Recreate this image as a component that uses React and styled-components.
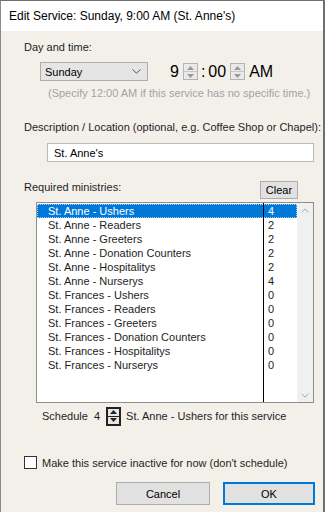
import React from "react";
import styled, { createGlobalStyle } from "styled-components";

const Global = createGlobalStyle`
  html, body { margin: 0; padding: 0; background: #f3f0e9; }
  * { box-sizing: border-box; }
`;

const ministries = [
  ["St. Anne - Ushers", 4],
  ["St. Anne - Readers", 2],
  ["St. Anne - Greeters", 2],
  ["St. Anne - Donation Counters", 2],
  ["St. Anne - Hospitalitys", 2],
  ["St. Anne - Nurserys", 4],
  ["St. Frances - Ushers", 0],
  ["St. Frances - Readers", 0],
  ["St. Frances - Greeters", 0],
  ["St. Frances - Donation Counters", 0],
  ["St. Frances - Hospitalitys", 0],
  ["St. Frances - Nurserys", 0],
];

/* janela inteira */
const Window = styled.div`
  width: 325px;
  height: 512px;
  background: #f3f0e9;
  border-top: 1px solid #6f6f6f;
  border-left: 1px solid #8a8a8a;
  border-right: 2px solid #6f6f6f;
  font-family: "Liberation Sans", Arial, sans-serif;
  font-size: 11px;
  color: #1e1e1e;
  display: flex;
  flex-direction: column;
`;

const TitleBar = styled.div`
  height: 30px;
  background: #fff;
  padding-left: 8px;
  display: flex;
  align-items: center;
  font-size: 12px;
  color: #000;
`;

const Body = styled.div`
  padding: 10px 0 0 23px;
  display: flex;
  flex-direction: column;
`;

const Label = styled.div`
  height: 13px;
  line-height: 13px;
  margin-top: ${(p) => p.$top || 0}px;
`;

const TimeRow = styled.div`
  display: flex;
  align-items: center;
  margin: 8px 0 0 16px;
  height: 19px;
`;

const Select = styled.div`
  width: 108px;
  height: 19px;
  background: #e5e5e5;
  border: 1px solid #adadad;
  display: flex;
  align-items: center;
  justify-content: space-between;
  padding: 0 6px 0 4px;
  color: #000;
`;

const TimeText = styled.span`
  font-size: 16px;
  color: #000;
  margin: ${(p) => p.$m || "0"};
`;

const Spin = styled.div`
  width: 15px;
  height: 17px;
  border: 1px solid #b4b4b4;
  background: #e9e9e9;
  display: flex;
  flex-direction: column;
`;

const SpinHalf = styled.div`
  flex: 1;
  display: flex;
  align-items: center;
  justify-content: center;
  border-top: ${(p) => (p.$bottom ? "1px solid #c8c8c8" : "none")};
`;

const Hint = styled.div`
  color: #a3a3a3;
  margin: 6px 0 0 24px;
  height: 13px;
  line-height: 13px;
`;

const Input = styled.div`
  width: 267px;
  height: 19px;
  background: #fff;
  border: 1px solid #b9b9b9;
  margin: 9px 0 0 23px;
  padding-left: 6px;
  display: flex;
  align-items: center;
  color: #000;
`;

const ReqRow = styled.div`
  display: flex;
  align-items: flex-start;
  justify-content: space-between;
  width: 274px;
  margin-top: 19px;
`;

const SmallButton = styled.div`
  width: 38px;
  height: 18px;
  background: #e1e1e1;
  border: 1px solid #adadad;
  display: flex;
  align-items: center;
  justify-content: center;
  color: #000;
`;

const ListBox = styled.div`
  width: 278px;
  height: 201px;
  margin: 3px 0 0 12px;
  border: 1px solid #8e8e8e;
  background: #fff;
  display: flex;
`;

const Rows = styled.div`
  flex: 1;
  padding-top: 1px;
  background: linear-gradient(
    to right,
    transparent 226px,
    #000 226px,
    #000 227px,
    transparent 227px
  );
`;

const Row = styled.div`
  height: 14px;
  display: grid;
  grid-template-columns: 226px 1fr;
  background: ${(p) => (p.$selected ? "#0078d7" : "transparent")};
  color: ${(p) => (p.$selected ? "#fff" : "#1e1e1e")};
  outline: ${(p) => (p.$selected ? "1px dotted #a8c8ff" : "none")};
  outline-offset: -1px;
  line-height: 14px;
`;

const NameCell = styled.div`
  padding-left: 11px;
  white-space: nowrap;
`;

const NumCell = styled.div`
  border-left: 1px solid #000;
  padding-left: 4px;
`;

const ScrollBar = styled.div`
  width: 16px;
  background: #f0f0f0;
  display: flex;
  flex-direction: column;
  justify-content: space-between;
  align-items: center;
  padding: 5px 0 4px;
`;

const ScheduleRow = styled.div`
  display: flex;
  align-items: center;
  margin: 4px 0 0 18px;
  height: 18px;
`;

const DarkSpin = styled.div`
  width: 15px;
  height: 19px;
  border: 2px solid #222;
  background: #e6e6e6;
  display: flex;
  flex-direction: column;
  margin: 0 5px 0 6px;
`;

const DarkHalf = styled.div`
  flex: 1;
  display: flex;
  align-items: center;
  justify-content: center;
  border-top: ${(p) => (p.$bottom ? "1px solid #222" : "none")};
`;

const CheckRow = styled.div`
  display: flex;
  align-items: center;
  margin-top: 31px;
  height: 13px;
`;

const Box = styled.div`
  width: 13px;
  height: 13px;
  border: 1px solid #333;
  background: #fff;
  margin-right: 5px;
`;

const Buttons = styled.div`
  display: flex;
  justify-content: flex-end;
  gap: 13px;
  margin: 13px 8px 0 0;
`;

const Button = styled.div`
  width: ${(p) => p.$w}px;
  height: 23px;
  background: #e1e1e1;
  border: ${(p) => (p.$default ? "2px solid #0078d7" : "1px solid #adadad")};
  display: flex;
  align-items: center;
  justify-content: center;
  color: #000;
`;

const Chevron = ({ up, color = "#606060", w = 9, h = 5 }) => (
  <svg width={w} height={h} viewBox="0 0 9 5">
    <path
      d={up ? "M0.5 4.5 L4.5 0.8 L8.5 4.5" : "M0.5 0.5 L4.5 4.2 L8.5 0.5"}
      fill="none"
      stroke={color}
      strokeWidth="1"
    />
  </svg>
);

const Tri = ({ up, color }) => (
  <svg width="7" height="4" viewBox="0 0 7 4">
    <path d={up ? "M0 4 L3.5 0 L7 4 Z" : "M0 0 L3.5 4 L7 0 Z"} fill={color} />
  </svg>
);

const Spinner = () => (
  <Spin>
    <SpinHalf>
      <Tri up color="#9a9a9a" />
    </SpinHalf>
    <SpinHalf $bottom>
      <Tri color="#9a9a9a" />
    </SpinHalf>
  </Spin>
);

export default function App() {
  return (
    <>
      <Global />
      <Window>
        <TitleBar>Edit Service: Sunday, 9:00 AM (St. Anne's)</TitleBar>
        <Body>
          <Label>Day and time:</Label>
          <TimeRow>
            <Select>
              Sunday
              <Chevron color="#555" />
            </Select>
            <TimeText $m="0 4px 0 22px">9</TimeText>
            <Spinner />
            <TimeText $m="0 3px">:</TimeText>
            <TimeText $m="0 4px 0 0">00</TimeText>
            <Spinner />
            <TimeText $m="0 0 0 4px">AM</TimeText>
          </TimeRow>
          <Hint>(Specify 12:00 AM if this service has no specific time.)</Hint>

          <Label $top={21}>
            Description / Location (optional, e.g. Coffee Shop or Chapel):
          </Label>
          <Input>St. Anne's</Input>

          <ReqRow>
            <Label $top={0}>Required ministries:</Label>
            <SmallButton>Clear</SmallButton>
          </ReqRow>
          <ListBox>
            <Rows>
              {ministries.map(([name, n], i) => (
                <Row key={name} $selected={i === 0}>
                  <NameCell>{name}</NameCell>
                  <NumCell>{n}</NumCell>
                </Row>
              ))}
            </Rows>
            <ScrollBar>
              <Chevron up color="#a6a6a6" w={8} h={5} />
              <Chevron color="#a6a6a6" w={8} h={5} />
            </ScrollBar>
          </ListBox>

          <ScheduleRow>
            Schedule&nbsp;&nbsp;4
            <DarkSpin>
              <DarkHalf>
                <Tri up color="#222" />
              </DarkHalf>
              <DarkHalf $bottom>
                <Tri color="#222" />
              </DarkHalf>
            </DarkSpin>
            St. Anne - Ushers for this service
          </ScheduleRow>

          <CheckRow>
            <Box />
            Make this service inactive for now (don't schedule)
          </CheckRow>

          <Buttons>
            <Button $w={94}>Cancel</Button>
            <Button $w={92} $default>
              OK
            </Button>
          </Buttons>
        </Body>
      </Window>
    </>
  );
}
